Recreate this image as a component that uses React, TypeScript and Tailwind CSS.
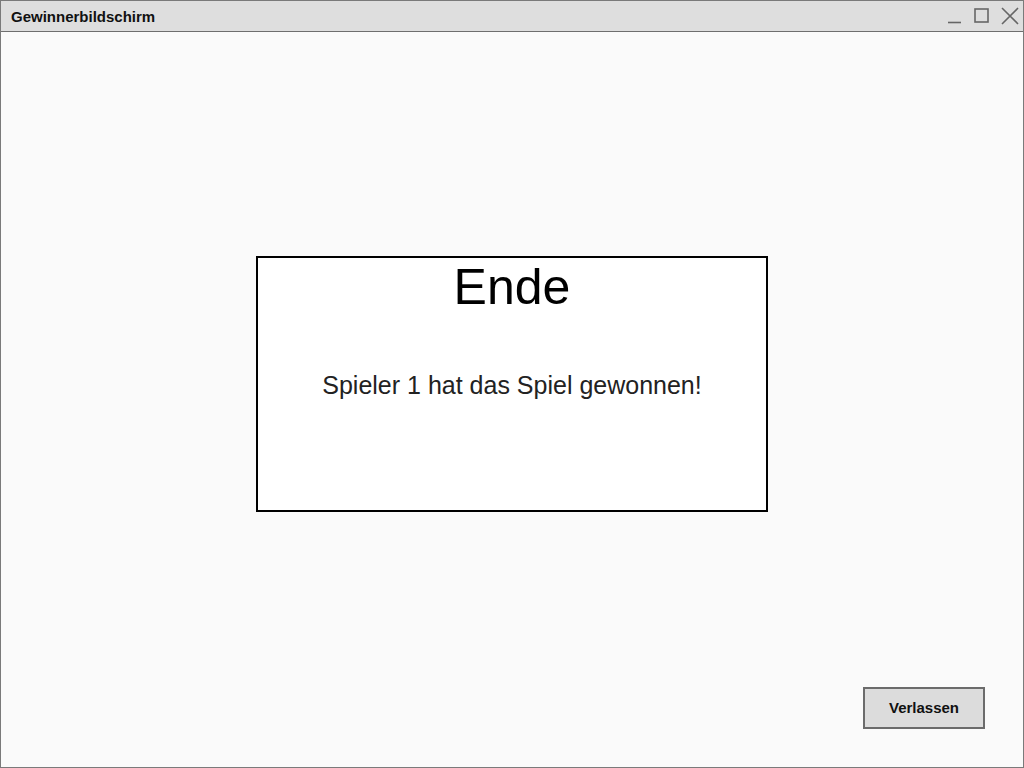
export default function App() {
  return (
    <div
      className="flex h-[768px] w-[1024px] flex-col border border-[#7a7a7a] bg-[#fafafa]"
      style={{ fontFamily: '"Liberation Sans", Arial, sans-serif' }}
    >
      {/* title bar */}
      <div className="flex h-[31px] items-center justify-between border-b border-[#6e6e6e] bg-[#dedede] pl-[10px] pr-[4px]">
        <span className="pt-[2px] text-[15px] font-semibold text-[#111]">Gewinnerbildschirm</span>
        <div className="flex items-center gap-[10px] text-[#666]">
          <svg width="18" height="18" viewBox="0 0 18 18">
            <line x1="3" y1="15.5" x2="16" y2="15.5" stroke="#666" strokeWidth="1.6" />
          </svg>
          <svg width="18" height="18" viewBox="0 0 18 18">
            <rect x="2" y="2" width="13" height="13" fill="none" stroke="#666" strokeWidth="1.6" />
          </svg>
          <svg width="18" height="18" viewBox="0 0 18 18">
            <path d="M1 1 L17 17 M17 1 L1 17" stroke="#666" strokeWidth="1.6" />
          </svg>
        </div>
      </div>

      {/* content */}
      <div className="flex flex-1 flex-col pt-[224px]">
        <div className="mx-auto flex h-[256px] w-[512px] flex-col items-center border-2 border-black bg-white">
          <h1 className="mt-[1px] text-[50px] leading-[56px] text-black">Ende</h1>
          <p className="mt-[52px] text-[25px] text-[#222]">Spieler 1 hat das Spiel gewonnen!</p>
        </div>
        <div className="flex-1" />
        <button className="mb-[38px] mr-[38px] h-[42px] w-[122px] self-end border-2 border-[#6b6b6b] bg-[#dcdcdc] pt-[1px] text-[15px] font-semibold text-[#111]">
          Verlassen
        </button>
      </div>
    </div>
  );
}
